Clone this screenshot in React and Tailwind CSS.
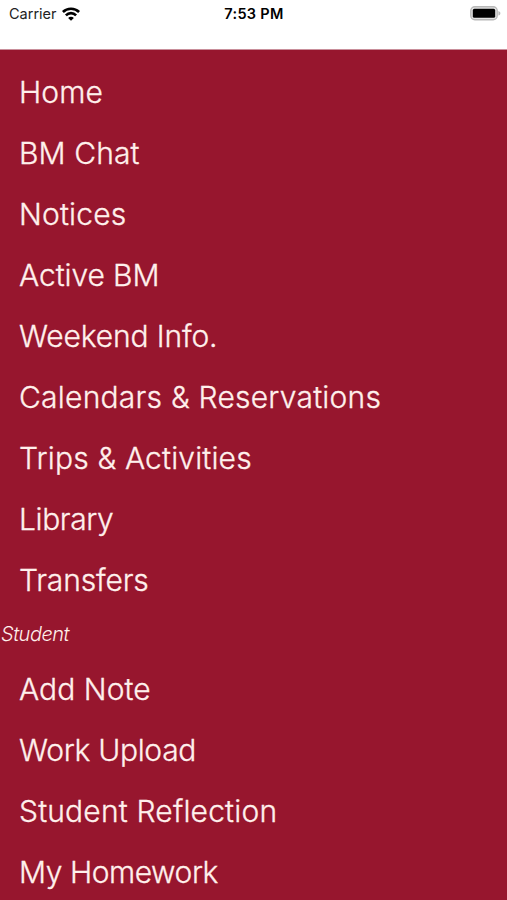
const mainItems = [
  { label: 'Home', spacing: 'tracking-[0.1px]' },
  { label: 'BM Chat', spacing: 'tracking-[0.1px]' },
  { label: 'Notices', spacing: 'tracking-[0.2px]' },
  { label: 'Active BM', spacing: 'tracking-[-0.1px]' },
  { label: 'Weekend Info.', spacing: 'tracking-[-0.15px]' },
  { label: 'Calendars & Reservations', spacing: 'tracking-[0.23px]' },
  { label: 'Trips & Activities', spacing: 'tracking-[0.16px]' },
  { label: 'Library', spacing: 'tracking-[-0.4px]' },
  { label: 'Transfers', spacing: 'tracking-[-0.16px]' },
];

const studentItems = [
  { label: 'Add Note', spacing: 'tracking-[0.05px]' },
  { label: 'Work Upload', spacing: 'tracking-[-0.3px]' },
  { label: 'Student Reflection', spacing: 'tracking-[0.18px]' },
  { label: 'My Homework', spacing: 'tracking-[-0.45px]' },
];

function WifiIcon() {
  return (
    <svg className="w-[18px] h-[14px]" viewBox="0 0 18 14" fill="none" stroke="#000" strokeWidth="2.6">
      <path d="M0.9 5C5.2 0.6 12.8 0.6 17.1 5" />
      <path d="M3.9 8.3C6.7 5.4 11.3 5.4 14.1 8.3" />
      <path d="M9 13.8L6.1 10.9C7.7 9.3 10.3 9.3 11.9 10.9Z" fill="#000" stroke="none" />
    </svg>
  );
}

function BatteryIcon() {
  return (
    <svg className="w-[31px] h-[15px]" viewBox="0 0 31 15">
      <rect x="0.8" y="0.8" width="26.4" height="13" rx="4" fill="#e4e4e4" stroke="#b8b8b8" strokeWidth="1.4" />
      <rect x="2.8" y="2.8" width="22.4" height="9" rx="1.6" fill="#000" />
      <path d="M28.4 5V9.6C31 8.8 31 5.8 28.4 5Z" fill="#b8b8b8" />
    </svg>
  );
}

function MenuList({ items }) {
  return (
    <ul>
      {items.map((item) => (
        <li
          key={item.label}
          className={`flex items-center h-[61px] pl-[19px] text-[30px] font-light whitespace-nowrap [-webkit-text-stroke:0.3px] ${item.spacing}`}
        >
          {item.label}
        </li>
      ))}
    </ul>
  );
}

export default function App() {
  return (
    <div className="flex flex-col w-[507px] h-[900px] overflow-hidden bg-white font-['Inter',sans-serif]">
      {/* Status bar */}
      <header className="grid grid-cols-3 shrink-0 h-[49px] pt-1 pl-[9px] pr-[6px] items-start text-black">
        <div className="flex items-center gap-[5px] h-[19px] text-[14.5px] text-[#222]">
          <span>Carrier</span>
          <WifiIcon />
        </div>
        <div className="h-5 leading-5 -ml-[2px] text-center text-[14.5px] font-semibold tracking-[0.3px]">7:53 PM</div>
        <div className="flex items-center justify-end h-[19px]">
          <BatteryIcon />
        </div>
      </header>

      {/* Navigation menu */}
      <nav className="flex-1 pt-[12px] bg-[#97162e] text-[#fff0ec] border-t border-[#c98f9b]">
        <MenuList items={mainItems} />
        <h2 className="flex items-center h-[48px] pl-px pb-[2px] text-[20px] font-light italic tracking-[-0.5px]">Student</h2>
        <MenuList items={studentItems} />
      </nav>
    </div>
  );
}
